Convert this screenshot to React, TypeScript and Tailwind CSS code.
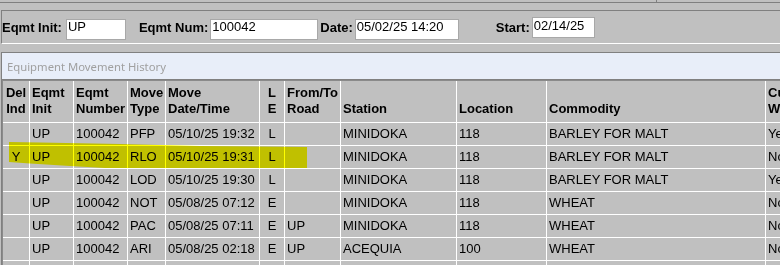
import React from 'react';

const cols = 'grid-cols-[27px_44px_54px_38px_94px_25px_56px_116px_90px_219px_120px]';

const headers: [string, string][] = [
  ['Del', 'Ind'],
  ['Eqmt', 'Init'],
  ['Eqmt', 'Number'],
  ['Move', 'Type'],
  ['Move', 'Date/Time'],
  ['L', 'E'],
  ['From/To', 'Road'],
  ['', 'Station'],
  ['', 'Location'],
  ['', 'Commodity'],
  ['Cust', 'Wbl'],
];

const rows: string[][] = [
  ['', 'UP', '100042', 'PFP', '05/10/25 19:32', 'L', '', 'MINIDOKA', '118', 'BARLEY FOR MALT', 'Yes'],
  ['Y', 'UP', '100042', 'RLO', '05/10/25 19:31', 'L', '', 'MINIDOKA', '118', 'BARLEY FOR MALT', 'No'],
  ['', 'UP', '100042', 'LOD', '05/10/25 19:30', 'L', '', 'MINIDOKA', '118', 'BARLEY FOR MALT', 'Yes'],
  ['', 'UP', '100042', 'NOT', '05/08/25 07:12', 'E', '', 'MINIDOKA', '118', 'WHEAT', 'No'],
  ['', 'UP', '100042', 'PAC', '05/08/25 07:11', 'E', 'UP', 'MINIDOKA', '118', 'WHEAT', 'No'],
  ['', 'UP', '100042', 'ARI', '05/08/25 02:18', 'E', 'UP', 'ACEQUIA', '100', 'WHEAT', 'No'],
  ['', '', '', '', '', '', '', '', '', '', ''],
];

const centered = (i: number) => i === 0 || i === 5;

const Field: React.FC<{ label: string; value: string; gap: string; width: string; raised?: boolean }> = ({
  label,
  value,
  gap,
  width,
  raised,
}) => (
  <>
    <span className={`${gap} mt-[2px] font-bold leading-[14px] whitespace-nowrap`}>{label}</span>
    <div
      className={`${width} ml-[2px] h-[21px] border border-[#a8a8a8] bg-white px-[1px] leading-[14px] whitespace-nowrap ${
        raised ? '-mt-[2px] pt-[1px]' : ''
      }`}
    >
      {value}
    </div>
  </>
);

export default function App() {
  return (
    <div className="relative w-[780px] h-[265px] overflow-hidden bg-[#c0c0c0] text-black text-[13px] font-['Liberation_Sans',Arial,sans-serif]">
      {/* edge of the panel above */}
      <div className="flex h-[2px]">
        <div className="w-[657px] border-r border-[#7f7f7f]" />
      </div>
      <div className="h-px bg-[#7f7f7f]" />

      {/* search form */}
      <div className="mt-[7px] ml-[1px] h-[34px] border-t border-l border-b border-[#808080] border-b-white pt-[8px]">
        <div className="flex items-start">
          <span className="mt-[2px] font-bold leading-[14px] whitespace-nowrap">Eqmt Init:</span>
          <div className="ml-[4px] w-[60px] h-[21px] border border-[#a8a8a8] bg-white px-[1px] leading-[14px]">UP</div>
          <Field label="Eqmt Num:" value="100042" gap="ml-[13px]" width="w-[108px]" />
          <Field label="Date:" value="05/02/25 14:20" gap="ml-[2px]" width="w-[104px]" />
          <Field label="Start:" value="02/14/25" gap="ml-[37px]" width="w-[63px]" raised />
        </div>
      </div>

      {/* history panel */}
      <div className="mt-[8px] ml-[1px] border-t border-l border-[#808080]">
        <div className="h-[27px] bg-[#e8eef9] border-b border-[#808080] pl-[5px] pt-[1px] leading-[25px] text-[11.3px] text-[#a0a0a0] font-['Noto_Sans',sans-serif]">
          Equipment Movement History
        </div>
        <div className="border-t border-l border-t-[#8a8a8a] border-l-[#8a8a8a]">
          <div className={`grid ${cols} h-[42px]`}>
            {headers.map(([a, b], i) => (
              <div
                key={i}
                className={`flex flex-col justify-end pb-[5px] px-[2px] border-r border-b border-white font-bold leading-[16px] whitespace-nowrap overflow-hidden ${
                  centered(i) ? 'items-center' : ''
                }`}
              >
                {a && <span>{a}</span>}
                <span>{b}</span>
              </div>
            ))}
          </div>
          {rows.map((r, ri) => (
            <div key={ri} className={`grid ${cols} h-[23px]`}>
              {r.map((c, ci) => (
                <div
                  key={ci}
                  className={`px-[2px] pt-[3px] border-r border-b border-white leading-[16px] whitespace-nowrap overflow-hidden ${
                    centered(ci) ? 'text-center' : ''
                  }`}
                >
                  {c}
                </div>
              ))}
            </div>
          ))}
        </div>
      </div>

      {/* highlighter mark over the deleted row */}
      <svg
        className="absolute left-0 top-0 pointer-events-none mix-blend-multiply"
        width="780"
        height="265"
        viewBox="0 0 780 265"
      >
        <path
          d="M9 142 L40 142.5 L120 144 L200 146 L307 147 L307 168 L200 168 L105 168 L70 166 L30 163.5 L9 162 Z"
          fill="#ffff00"
        />
      </svg>
    </div>
  );
}
